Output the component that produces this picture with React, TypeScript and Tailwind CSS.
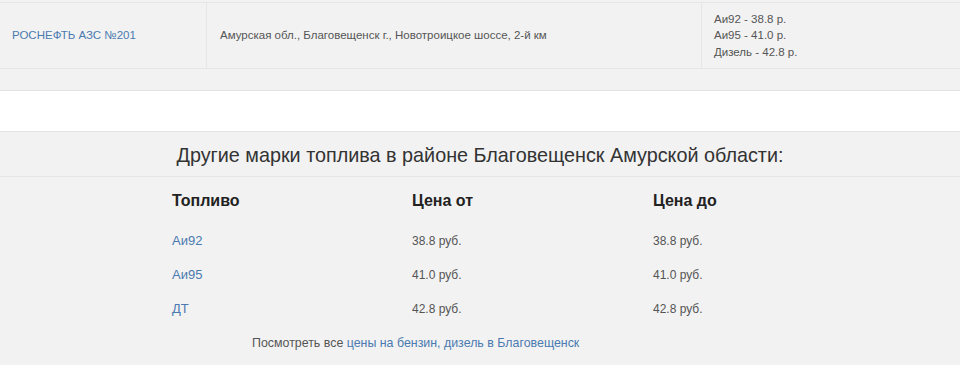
import React from "react";

export default function App() {
  const rows = [
    { name: "Аи92", from: "38.8 руб.", to: "38.8 руб." },
    { name: "Аи95", from: "41.0 руб.", to: "41.0 руб." },
    { name: "ДТ", from: "42.8 руб.", to: "42.8 руб." },
  ];
  return (
    <div className="w-[960px] h-[366px] overflow-hidden bg-white" style={{ fontFamily: '"Liberation Sans", Arial, sans-serif' }}>
      <div className="bg-[#f2f2f2] pt-[2px] h-[91px] border-b border-[#e3e3e3]">
        <div className="flex border-t border-b border-[#e6e6e6] h-[67px] text-[11.5px] text-[#555]">
          <div className="w-[207px] border-r border-[#e6e6e6] flex items-center pl-3 text-[#4a7ab0]">РОСНЕФТЬ АЗС №201</div>
          <div className="w-[495px] border-r border-[#e6e6e6] flex items-center pl-[13px]">Амурская обл., Благовещенск г., Новотроицкое шоссе, 2-й км</div>
          <div className="flex-1 flex flex-col justify-center pl-3 leading-[16.5px]">
            <div>Аи92 - 38.8 р.</div>
            <div>Аи95 - 41.0 р.</div>
            <div>Дизель - 42.8 р.</div>
          </div>
        </div>
      </div>
      <div className="h-[41px] bg-white border-b border-[#e3e3e3]" />
      <div className="bg-[#f2f2f2] h-[233px]">
        <div className="h-[45px] pt-[3px] border-b border-[#e6e6e6] flex items-center justify-center text-[19.8px] text-[#333]">
          Другие марки топлива в районе Благовещенск Амурской области:
        </div>
        <div className="pl-[172px]">
          <div className="grid grid-cols-[240px_241px_240px] h-[47px] items-center text-[16px] font-bold text-[#222] pt-[1px]">
            <div>Топливо</div>
            <div>Цена от</div>
            <div>Цена до</div>
          </div>
          {rows.map((r) => (
            <div key={r.name} className="grid grid-cols-[240px_241px_240px] h-[34px] items-center text-[12px] text-[#555]">
              <div className="text-[13px] text-[#4a7ab0]">{r.name}</div>
              <div>{r.from}</div>
              <div>{r.to}</div>
            </div>
          ))}
        </div>
        <div className="pl-[252px] h-[34px] flex items-center text-[12.4px] text-[#555]">
          <span>Посмотреть все&nbsp;</span>
          <span className="text-[#4a7ab0]">цены на бензин, дизель в Благовещенск</span>
        </div>
      </div>
    </div>
  );
}
